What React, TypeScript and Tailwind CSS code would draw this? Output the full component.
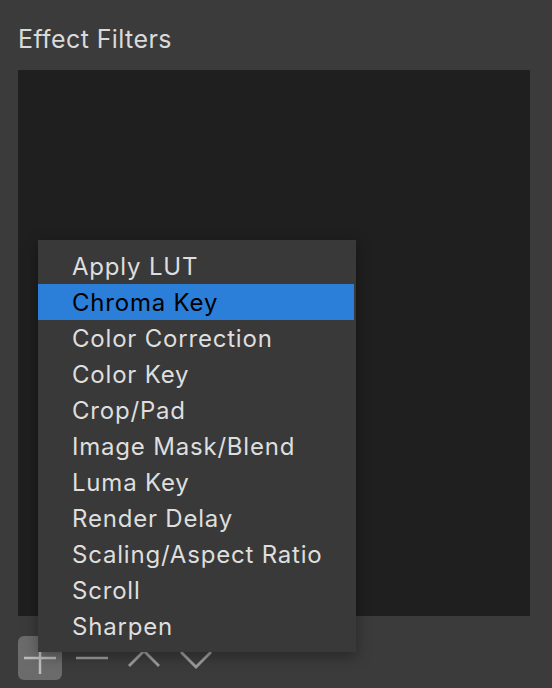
import React from 'react';

const filters = [
    'Apply LUT',
    'Chroma Key',
    'Color Correction',
    'Color Key',
    'Crop/Pad',
    'Image Mask/Blend',
    'Luma Key',
    'Render Delay',
    'Scaling/Aspect Ratio',
    'Scroll',
    'Sharpen',
];

export default function App() {
    const selected = 'Chroma Key';

    return (
        <div
            className="relative w-[552px] h-[688px] bg-[#3b3b3b] flex flex-col px-[18px] overflow-hidden"
            style={{ fontFamily: 'Inter, "Noto Sans", sans-serif' }}
        >
            {/* Header */}
            <h1 className="pt-[24px] text-[25px] leading-[30px] tracking-[0.4px] text-[#dadada] font-normal">
                Effect Filters
            </h1>

            {/* Filter list */}
            <div className="mt-[16px] h-[546px] w-[512px] bg-[#1f1f1f]" />

            {/* Toolbar */}
            <div className="mt-[20px] flex items-center gap-[8px]">
                <ToolButton active>
                    <svg width="32" height="32" viewBox="0 0 32 32">
                        <path d="M0 16H32M16 0V32" stroke="#bdbdbd" strokeWidth="2.5" fill="none" />
                    </svg>
                </ToolButton>
                <ToolButton>
                    <svg width="32" height="32" viewBox="0 0 32 32">
                        <path d="M0 16H32" stroke="#9c9c9c" strokeWidth="2.5" fill="none" />
                    </svg>
                </ToolButton>
                <ToolButton>
                    <svg width="32" height="32" viewBox="0 0 32 32">
                        <path d="M1 24L16 9L31 24" stroke="#9c9c9c" strokeWidth="2.8" fill="none" />
                    </svg>
                </ToolButton>
                <ToolButton>
                    <svg width="32" height="32" viewBox="0 0 32 32">
                        <path d="M1 10L16 25L31 10" stroke="#9c9c9c" strokeWidth="2.8" fill="none" />
                    </svg>
                </ToolButton>
            </div>

            {/* Add filter popup menu */}
            <div className="absolute left-[38px] top-[240px] w-[318px] py-[8px] bg-[#393939] shadow-[0_4px_14px_rgba(0,0,0,0.35)]">
                {filters.map((name) => (
                    <div
                        key={name}
                        className={`mr-[2px] h-[36px] pl-[34px] pt-[1px] text-[24px] leading-[36px] tracking-[0.8px] whitespace-nowrap ${
                            name === selected ? 'bg-[#2b7fd9] text-black' : 'text-[#dedede]'
                        }`}
                    >
                        {name}
                    </div>
                ))}
            </div>
        </div>
    );
}

function ToolButton({ children, active = false }: { children: React.ReactNode; active?: boolean }) {
    return (
        <button
            className={`w-[44px] h-[44px] flex items-center justify-center rounded-[6px] ${
                active ? 'bg-[#6b6b6b]' : 'bg-transparent'
            }`}
        >
            {children}
        </button>
    );
}
